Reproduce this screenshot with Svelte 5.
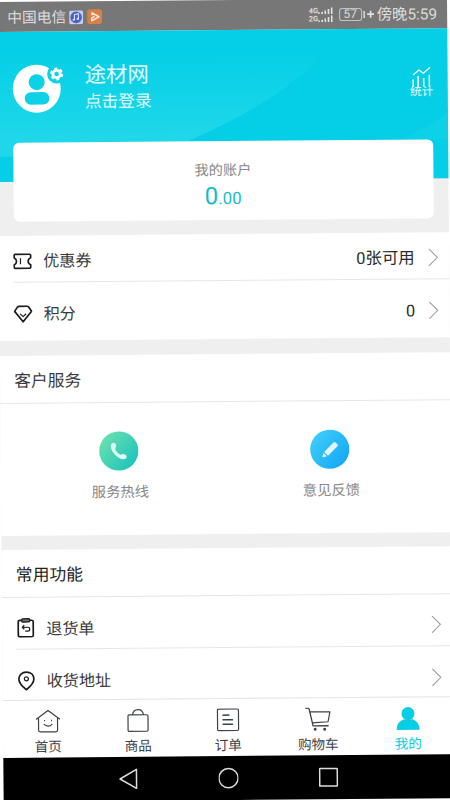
<script>
  const tabs = [
    { id: 'home', label: '首页' },
    { id: 'goods', label: '商品' },
    { id: 'orders', label: '订单' },
    { id: 'cart', label: '购物车' },
    { id: 'mine', label: '我的', active: true }
  ];
</script>

{#snippet chevron()}
  <svg class="chevron" width="10" height="18" viewBox="0 0 10 18" fill="none" stroke="#999" stroke-width="1"><path d="M.7.5 9.2 9 .7 17.5" /></svg>
{/snippet}

<div class="phone">
  <div class="status">
    <span class="carrier">中国电信</span>
    <svg class="music" width="14" height="14" viewBox="0 0 14 14">
      <rect width="14" height="14" rx="2" fill="#c9cdea" /><circle cx="7" cy="7" r="5.8" fill="#4a62c4" />
      <path d="M5.3 9.3V4.2l4-.8v5" fill="none" stroke="#e4e8ff" stroke-width="1" /><circle cx="4.6" cy="9.4" r="1.1" fill="#e4e8ff" /><circle cx="8.6" cy="8.6" r="1.1" fill="#e4e8ff" />
    </svg>
    <svg width="15" height="15" viewBox="0 0 15 15">
      <rect width="15" height="15" rx="3" fill="#da8045" />
      <path d="M5 6V3.6L11.8 7.6 4.6 11.6V8.7L7.6 7.2" fill="none" stroke="#fbe9dc" stroke-width="1.5" stroke-linejoin="round" />
    </svg>
    <div class="signals">
      {#each ['4G', '2G'] as net}
        <div class="signal">
          <span>{net}</span>
          <svg width="15" height="7" viewBox="0 0 15 7" fill="#e2e2e2"><path d="M0 5h1.6v2H0zM3.2 4.6h1.6V7H3.2zM6.4 3.3H8V7H6.4zM9.6 1.7h1.6V7H9.6zM12.8 0h1.6v7h-1.6z" /></svg>
        </div>
      {/each}
    </div>
    <div class="battery">57</div>
    <svg class="charge" width="11" height="13" viewBox="0 0 11 13" fill="none" stroke="#e2e2e2"><path d="M1 3v7" stroke-width="1.5" /><path d="M4 6.300h7M7.500 2.800v7" stroke-width="1.7" /></svg>
    <span class="time">傍晚5:59</span>
  </div>

  <div class="top">
    <header>
      <svg class="waves" width="450" height="150" viewBox="0 0 450 150">
        <defs>
          <linearGradient id="wave" gradientUnits="userSpaceOnUse" x1="0" y1="20" x2="0" y2="105"><stop offset="0" stop-color="#1fd7e9" stop-opacity="0" /><stop offset="1" stop-color="#1fd7e9" /></linearGradient>
        </defs>
        <path d="M0 20H330Q285 71 190 110.500L150 125H0Z" fill="url(#wave)" />
        <path d="M450 84Q430 98 403 111H450Z" fill="#1fd7e9" opacity=".35" />
      </svg>
      <svg class="avatar" width="54" height="54" viewBox="0 0 54 54">
        <circle cx="25" cy="29" r="24" fill="#fff" />
        <circle cx="45" cy="14.5" r="9.5" fill="#0dd2e7" />
        <circle cx="25" cy="22.5" r="8" fill="#0dd2e7" />
        <rect x="13" y="32.5" width="24.5" height="12.5" rx="6" fill="#0dd2e7" />
        <circle cx="45" cy="14.5" r="3.7" fill="none" stroke="#fff" stroke-width="2.8" />
        <circle cx="45" cy="14.5" r="5.4" fill="none" stroke="#fff" stroke-width="2.2" stroke-dasharray="2.827 2.827" />
      </svg>
      <div class="who">
        <div class="name">途材网</div>
        <div class="login">点击登录</div>
      </div>
      <div class="stats">
        <svg width="20" height="21" viewBox="0 0 20 21" fill="none" stroke="#fff" stroke-width="1.3">
          <path d="M1.500 8.500 7.300 3.500l4.500 3.300L18.500.8" />
          <path d="M1.500 20.500V13M6.500 20.500V9.500M12 20V11.500M17.700 20.500V8.500" stroke-width="1.500" />
        </svg>
        <span>统计</span>
      </div>
    </header>
    <div class="account">
      <div class="caption">我的账户</div>
      <div class="amount">0<small>.00</small></div>
    </div>
  </div>

  <section class="assets">
    <div class="row first">
      <svg width="19" height="20" viewBox="0 0 19 20" fill="none" stroke="#1b1b1b" stroke-width="1.7" stroke-linejoin="round"><path d="M2 3.500h14.500q1 0 1 1V7q-2.500 1-2.500 3.500t2.500 3.500v2.500q0 1-1 1H2q-1 0-1-1V14q2.300-1 2.300-3.500T1 7V4.500q0-1 1-1Z" /><path d="M7.300 7.500v6" stroke-width="1.2" /></svg>
      <span class="label">优惠券</span><span class="value">0张可用</span>{@render chevron()}
    </div>
    <div class="row points">
      <svg width="19" height="20" viewBox="0 0 19 20" fill="none" stroke="#1b1b1b" stroke-width="1.7" stroke-linejoin="round"><path d="M5.500 2.500h8q1 0 1.600.8L18 7.500 9.500 18 1 7.500 3.900 3.300q.6-.8 1.600-.8Z" /><path d="m6.500 10 3 2.800 3-2.800" stroke-width="1.2" /></svg>
      <span class="label">积分</span><span class="value">0</span>{@render chevron()}
    </div>
  </section>

  <section class="support">
    <h2>客户服务</h2>
    <div class="services">
      <div class="service">
        <svg width="40" height="40" viewBox="0 0 40 40">
          <defs><linearGradient id="green" x1="0" y1=".1" x2="1" y2=".9"><stop stop-color="#6ee3ae" /><stop offset="1" stop-color="#18c0bd" /></linearGradient></defs>
          <circle cx="20" cy="20" r="19.6" fill="url(#green)" />
          <path d="M13.500 12.200Q15.500 11.200 16.700 12.800Q18.400 15.200 16.500 17Q16.300 20.500 20.800 23.300Q22 24 23 23.300Q25 22.700 27.500 24.600Q28.800 26 26.900 27.500Q23.500 29.500 18.800 26Q13.800 22.300 12.300 17Q11.500 13.500 13.500 12.200Z" fill="#e2faf6" />
        </svg>
        <span>服务热线</span>
      </div>
      <div class="service">
        <svg width="40" height="40" viewBox="0 0 40 40">
          <defs><linearGradient id="blue" x1="0" y1=".1" x2="1" y2=".9"><stop stop-color="#42d0fa" /><stop offset="1" stop-color="#10a5f5" /></linearGradient></defs>
          <circle cx="20" cy="20" r="19.6" fill="url(#blue)" />
          <path d="m14.300 22.700 9.500-9.400q1-1 2 0l1.900 1.800q1 1 0 2l-9.500 9.400ZM13.600 23.800l3.500 3.200-4.600 1.100Z" fill="#dff6ff" />
        </svg>
        <span>意见反馈</span>
      </div>
    </div>
  </section>

  <section class="common">
    <h2>常用功能</h2>
    <div class="row returns">
      <svg width="19" height="20" viewBox="0 0 19 20" fill="none" stroke="#1b1b1b" stroke-width="1.7" stroke-linejoin="round"><rect x="2" y="2.5" width="15" height="16.5" rx="1.5" /><rect x="5.5" y="1" width="8" height="3.2" rx="1" fill="#777" stroke-width="1.3" /><path d="M8 7.300 6 9.500l2 2M6 9.500h5.500q2 0 2 1.900t-2 1.900H9" stroke-width="1.2" /></svg>
      <span class="label">退货单</span>{@render chevron()}
    </div>
    <div class="row address">
      <svg width="19" height="20" viewBox="0 0 19 20" fill="none" stroke="#1b1b1b" stroke-width="1.7" stroke-linejoin="round"><path d="M9.700 19Q2.200 13 2.200 8.400C2.200 4 5.500 1.300 9.700 1.300s7.500 2.700 7.500 7.100Q17.200 13 9.700 19Z" /><circle cx="9.7" cy="8" r="2" stroke-width="1.2" /></svg>
      <span class="label">收货地址</span>{@render chevron()}
    </div>
  </section>

  <nav class="tabs">
    {#each tabs as tab (tab.id)}
      <div class="tab" class:active={tab.active}>
        <svg width="26" height="24" viewBox="0 0 26 24" fill="none" stroke="#3c4147" stroke-width="1.2" stroke-linejoin="round">
          {#if tab.id === 'home'}
            <path d="M1 9.800 13 1l12 8.800M3.500 8.500v12q0 1.800 1.800 1.800h15.400q1.800 0 1.800-1.800v-12" /><path d="M8.700 14.500q4.300 4 8.600 0" /><path d="M9 11h1M16 11h1" stroke-width="1.4" />
          {:else if tab.id === 'goods'}
            <rect x="3" y="6" width="20" height="16.5" rx="1.2" /><path d="M7.500 6C8 2.700 10 .8 13 .8S18 2.700 18.500 6" />
          {:else if tab.id === 'orders'}
            <rect x="2.5" y="1" width="21" height="21.5" rx="1.2" /><path d="M7.500 7h7M7.500 11.600h10.500M7.500 16.200h10.500" stroke-width="1.5" />
          {:else if tab.id === 'cart'}
            <path d="M.5.8H3q1 0 1.300 1.300L8 18.500h15.500" stroke-width="1.3" /><path d="M4.900 4.500H25L23 14.500 7.100 15.500" /><circle cx="10" cy="22" r="1.5" fill="#3c4147" stroke="none" /><circle cx="19.5" cy="22" r="1.5" fill="#3c4147" stroke="none" />
          {:else}
            <g fill="#07cde5" stroke="none"><circle cx="13" cy="7" r="6.5" /><path d="M1.500 23.200q0-7.500 6.700-10.400h9.600q6.700 2.900 6.700 10.400Z" /></g>
          {/if}
        </svg>
        <span>{tab.label}</span>
      </div>
    {/each}
  </nav>

  <div class="keys">
    <svg width="20" height="22" viewBox="0 0 20 22" fill="none" stroke="#ddd" stroke-width="1.5" stroke-linejoin="round"><path d="M18 1.500v19L1.500 11Z" /></svg>
    <svg width="20" height="22" viewBox="0 0 20 22" fill="none" stroke="#ddd" stroke-width="1.5"><circle cx="10" cy="11" r="9.6" /></svg>
    <svg width="20" height="22" viewBox="0 0 20 22" fill="none" stroke="#ddd" stroke-width="1.5"><rect x="1.2" y="2.2" width="17.6" height="17.6" rx=".5" /></svg>
  </div>
</div>

<style>
  :global(html), :global(body) { margin: 0; height: 800px; overflow: hidden; background: #fff; }
  .phone {
    width: 450px; height: 800px; box-sizing: border-box; display: flex; flex-direction: column;
    background: #efefef; color: #3a3a3a; font-family: Roboto, "Noto Sans CJK SC", sans-serif; line-height: 1;
    transform: translate(-3px, 2px) rotate(-0.48deg); transform-origin: 0 0;
  }
  .phone > * { flex: none; }
  svg { display: block; flex: none; }
  .status { height: 30px; background: #777; color: #dcdcdc; display: flex; align-items: center; padding: 1px 10px 0; box-sizing: border-box; }
  .carrier { font-size: 14.8px; padding-top: 1px; }
  .music { margin: 0 4px 0 3px; }
  .signals { margin-left: auto; display: flex; flex-direction: column; gap: 1px; }
  .signal { display: flex; align-items: flex-end; gap: 0; height: 7px; }
  .signal span { font-size: 7.5px; line-height: 7px; font-weight: 700; width: 9px; }
  .battery { width: 23px; height: 13px; box-sizing: border-box; border: 1px solid #c4c4c4; border-radius: 3px; margin-left: 6px; font-size: 12px; line-height: 11.5px; text-align: center; }
  .charge { margin: -1px 3px 0 1px; }
  .time { font-size: 15.4px; padding-top: 1.5px; }
  .top { height: 204px; }
  header { height: 150px; background: #04cfe6; position: relative; display: flex; align-items: flex-start; box-sizing: border-box; padding: 28px 14px 0 14px; }
  .waves { position: absolute; left: 0; top: 0; }
  .avatar, .who, .stats { position: relative; }
  .who { color: #e4fbff; margin-left: 19px; padding-top: 5px; }
  .name { font-size: 21.4px; line-height: 22px; }
  .login { font-size: 16.7px; line-height: 17px; margin-top: 7px; }
  .stats { margin-left: auto; margin-top: 9.5px; width: 24px; display: flex; flex-direction: column; align-items: center; color: #e9fcff; }
  .stats span { font-size: 11.8px; line-height: 12px; margin-top: -2px; white-space: nowrap; }
  .account { position: relative; height: 79px; margin: -39px 15px 0; background: #fff; border-radius: 6px; text-align: center; box-sizing: border-box; padding-top: 21.5px; }
  .caption { font-size: 14.2px; line-height: 15px; color: #888; padding-right: 1px; }
  .amount { font-size: 24px; line-height: 28px; margin-top: 4.5px; color: #1cb9ce; padding-right: 1px; }
  .amount small { font-size: 16.8px; }
  section { background: #fff; }
  .assets { height: 105px; margin-bottom: 15px; }
  .row { display: flex; align-items: center; box-sizing: border-box; margin-left: 14px; padding-right: 11px; }
  .label { font-size: 16.1px; margin-left: 11px; padding-top: 3px; }
  .value { margin-left: auto; font-size: 16.4px; padding-top: 3px; color: #2a2a2a; }
  .chevron { margin-left: auto; }
  .value + .chevron, .value + :global(.chevron) { margin-left: 13.5px; }
  .first { height: 47px; padding-top: 4px; border-bottom: 1px solid #e6e6e6; }
  .points { height: 58px; padding-top: 3px; }
  h2 { margin: 0; font-size: 16.8px; font-weight: 400; box-sizing: border-box; height: 47.5px; line-height: 50.5px; padding-left: 14px; border-bottom: 1px solid #e6e6e6; }
  .support { height: 179.5px; margin-bottom: 14.5px; }
  .services { display: flex; padding: 28.5px 0 0 12.8px; }
  .service { width: 211px; display: flex; flex-direction: column; align-items: center; gap: 12.5px; font-size: 14.3px; line-height: 16px; color: #888; }
  .service span { padding-left: 2px; }
  .common { height: 149.5px; }
  .common h2 { color: #222; }
  .returns { height: 52.5px; padding-top: 10px; border-bottom: 1px solid #e6e6e6; }
  .address { height: 49.5px; padding-top: 12px; }
  .tabs { height: 58.5px; box-sizing: border-box; background: #fff; border-top: 1px solid #e4e4e4; display: flex; }
  .tab { width: 90px; padding-top: 9.5px; display: flex; flex-direction: column; align-items: center; gap: 5.5px; font-size: 13.6px; line-height: 14px; color: #3c4147; }
  .active { color: #07cde5; }
  .keys { flex: 1; background: #000; display: flex; align-items: center; justify-content: center; gap: 80px; }
</style>
